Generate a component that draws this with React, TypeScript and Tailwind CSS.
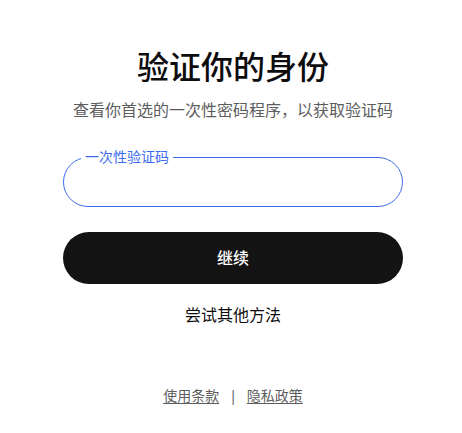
export default function App() {
  return (
    <div
      className="flex min-h-[433px] w-full flex-col items-center bg-white pl-[4px] text-[#0d0d0d]"
      style={{ fontFamily: '"Noto Sans", "Noto Sans CJK SC", sans-serif' }}
    >
      <div className="flex w-[340px] flex-col items-center pt-[47px]">
        <h1 className="text-[32px] font-medium leading-[40px]">验证你的身份</h1>
        <p className="mt-[11px] text-[16px] leading-6 text-[#5d5d5d]">
          查看你首选的一次性密码程序，以获取验证码
        </p>

        <div className="relative mt-[35px] w-full">
          <input
            type="text"
            className="h-[50px] w-full rounded-full border border-[#3d6cf0] bg-white px-5 text-[16px] outline-none"
          />
          <span className="absolute left-[18px] top-[-10px] bg-white px-[4px] text-[14px] leading-5 text-[#3d6cf0]">
            一次性验证码
          </span>
        </div>

        <button className="mt-[25px] h-[52px] w-full rounded-full bg-[#131313] text-[16px] font-medium text-white">
          继续
        </button>

        <button className="mt-[19px] text-[16px] leading-6 text-[#0d0d0d]">尝试其他方法</button>

        <div className="mt-[59px] flex items-center gap-[10px] text-[14px] leading-5 text-[#5d5d5d]">
          <a href="#" className="underline underline-offset-2">
            使用条款
          </a>
          <span>|</span>
          <a href="#" className="underline underline-offset-2">
            隐私政策
          </a>
        </div>
      </div>
    </div>
  )
}
